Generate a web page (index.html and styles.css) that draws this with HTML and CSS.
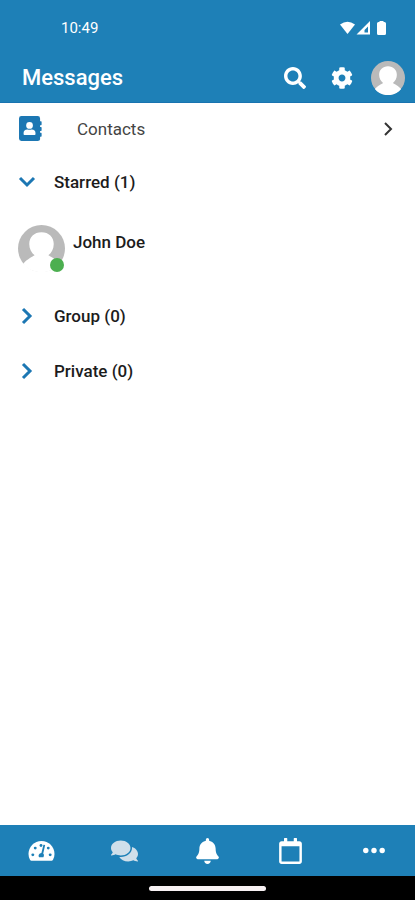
FILE: index.html
```html
<!DOCTYPE html>
<html lang="en">
<head>
<meta charset="utf-8">
<meta name="viewport" content="width=device-width, initial-scale=1">
<title>Messages</title>
<link rel="stylesheet" href="styles.css">
</head>
<body>
<svg class="defs" aria-hidden="true">
  <symbol id="person" viewBox="0 0 48 48">
    <circle cx="24" cy="24" r="24" fill="#bababa"/>
    <path fill="#fff" d="M24 7.500C16.500 7.500 11.500 12.500 11.500 19.500c0 5 2.200 9 5.500 11.500-2 1.500-8 4-11.500 8.500C9.500 45 16.500 48.200 24 48.200s14.500-3.200 18.500-8.700C39 35 33 32.500 31 31c3.300-2.500 5.500-6.500 5.500-11.500C36.500 12.500 31.500 7.500 24 7.500z"/>
  </symbol>
</svg>
<header class="top">
  <div class="status">
    <span class="clock">10:49</span>
    <svg class="signals" viewBox="0 0 48 16" aria-hidden="true">
      <path fill="#fff" d="M1 4.500Q8.500-1 16 4.500L8.500 14z"/>
      <path fill="#fff" fill-rule="evenodd" d="M17.500 14.500L31 1v13.500zM25.500 12.500h3.500V6.500l-3.500 3.500z"/>
      <path fill="#fff" d="M40.500 1h4v1h1Q47 2 47 3.500v10q0 1.500-1.500 1.500h-6q-1.500 0-1.500-1.500v-10q0-1.500 1.500-1.500h1z"/>
    </svg>
  </div>
  <div class="toolbar">
    <h1 class="title">Messages</h1>
    <button class="tool" aria-label="Search"><svg class="icon22" viewBox="0 0 512 512"><path fill="currentColor" d="M505 442.700L405.300 343c-4.500-4.500-10.600-7-17-7H372c27.600-35.300 44-79.700 44-128C416 93.100 322.900 0 208 0S0 93.100 0 208s93.100 208 208 208c48.300 0 92.700-16.400 128-44v16.300c0 6.400 2.500 12.500 7 17l99.700 99.700c9.400 9.400 24.600 9.400 33.900 0l28.300-28.300c9.400-9.400 9.400-24.600.1-34zM208 336c-70.700 0-128-57.200-128-128 0-70.700 57.200-128 128-128 70.700 0 128 57.200 128 128 0 70.700-57.200 128-128 128z"/></svg></button>
    <button class="tool" aria-label="Settings"><svg class="icon22" viewBox="0 0 512 512"><path fill="currentColor" d="M487.400 315.700l-42.600-24.600c4.300-23.200 4.300-47 0-70.200l42.600-24.600c4.900-2.800 7.100-8.600 5.500-14-11.100-35.600-30-67.800-54.700-94.600-3.800-4.100-10-5.100-14.800-2.300L380.800 110c-17.900-15.400-38.500-27.300-60.800-35.100V25.800c0-5.600-3.900-10.500-9.400-11.700-36.700-8.200-74.300-7.800-109.200 0-5.500 1.200-9.400 6.100-9.400 11.700V75c-22.200 7.900-42.800 19.800-60.800 35.100L88.700 85.500c-4.900-2.800-11-1.900-14.800 2.300-24.700 26.700-43.600 58.900-54.700 94.600-1.700 5.400.6 11.200 5.500 14L67.300 221c-4.300 23.200-4.300 47 0 70.200l-42.600 24.600c-4.900 2.800-7.100 8.600-5.500 14 11.100 35.600 30 67.800 54.700 94.600 3.800 4.100 10 5.100 14.800 2.300l42.600-24.600c17.900 15.400 38.500 27.300 60.800 35.100v49.200c0 5.600 3.900 10.500 9.400 11.700 36.700 8.200 74.300 7.800 109.200 0 5.500-1.200 9.400-6.100 9.400-11.700v-49.200c22.200-7.900 42.800-19.800 60.800-35.100l42.600 24.600c4.900 2.800 11 1.900 14.800-2.300 24.700-26.700 43.600-58.900 54.700-94.600 1.500-5.500-.7-11.300-5.600-14.100zM256 336c-44.100 0-80-35.900-80-80s35.900-80 80-80 80 35.900 80 80-35.900 80-80 80z"/></svg></button>
    <button class="tool" aria-label="Profile"><svg class="me"><use href="#person"/></svg></button>
  </div>
</header>
<main class="list">
  <a class="contacts" href="#contacts">
    <svg class="book" viewBox="0 0 24 26" aria-hidden="true">
      <path fill="#1c77b3" d="M2.500 0h17Q22 0 22 2.500v3h1q.6 0 .6.700v2.600q0 .7-.6.700h-1v2h1q.6 0 .6.700v2.600q0 .7-.6.700h-1v2h1q.6 0 .6.700v2.600q0 .7-.6.700h-1v2.700Q22 26 19.500 26h-17Q0 26 0 23.500v-21Q0 0 2.500 0z"/>
      <circle cx="11" cy="9.800" r="3.500" fill="#fff"/>
      <path fill="#fff" d="M4.800 19v-1.200q0-3.800 4-3.800 2.200.8 4.400 0 4 0 4 3.800V19q0 .8-.8.800H5.600q-.8 0-.8-.8z"/>
    </svg>
    <span class="grow">Contacts</span>
    <svg class="next" viewBox="0 0 10 16" aria-hidden="true"><path d="M2 2l6 6-6 6"/></svg>
  </a>
  <button class="section" aria-expanded="true">
    <svg class="chevron" viewBox="0 0 18 18" aria-hidden="true"><path d="M2 5l7 7 7-7"/></svg>
    <span>Starred (1)</span>
  </button>
  <a class="member" href="#john-doe">
    <span class="avatar"><svg class="face" aria-hidden="true"><use href="#person"/></svg><span class="online"></span></span>
    <span class="name">John Doe</span>
  </a>
  <button class="section" aria-expanded="false">
    <svg class="chevron" viewBox="0 0 18 18" aria-hidden="true"><path d="M5 2l7 7-7 7"/></svg>
    <span>Group (0)</span>
  </button>
  <button class="section" aria-expanded="false">
    <svg class="chevron" viewBox="0 0 18 18" aria-hidden="true"><path d="M5 2l7 7-7 7"/></svg>
    <span>Private (0)</span>
  </button>
</main>
<nav class="tabs">
  <a class="tab" href="#dashboard" aria-label="Dashboard"><svg class="tab-icon" viewBox="0 0 28 26">
    <path fill="#fff" d="M14 2.500C6.500 2.500.5 8.500.5 16q0 3.500 1.700 6.300.5.700 1.300.7h21q.8 0 1.300-.7Q27.500 19.500 27.500 16C27.500 8.500 21.500 2.500 14 2.500z"/>
    <g fill="#1e80b7"><circle cx="13.500" cy="7.300" r="1.500"/><circle cx="7.500" cy="10" r="1.500"/><circle cx="5" cy="17" r="1.500"/><circle cx="21" cy="10" r="1.500"/><circle cx="23" cy="17" r="1.500"/><path d="M16 6.500l1.800.4-2 8.700q1 1 .7 2.400l-.5 1.500h-4.500q-1-1.200-.3-2.700.8-1.500 2.700-1.600z"/></g>
  </svg></a>
  <a class="tab" href="#messages" aria-label="Messages" aria-current="page"><svg class="tab-icon" viewBox="0 0 576 512"><path fill="#d0dfea" d="M416 192c0-88.400-93.100-160-208-160S0 103.600 0 192c0 34.300 14.100 65.900 38 92-13.400 30.200-35.500 54.200-35.800 54.500-2.200 2.300-2.800 5.700-1.500 8.700S4.800 352 8 352c36.600 0 66.900-12.300 88.700-25 32.200 15.700 70.300 25 111.300 25 114.900 0 208-71.600 208-160zm122 220c23.900-26 38-57.700 38-92 0-66.900-53.500-124.200-129.300-148.100.9 6.600 1.300 13.300 1.300 20.100 0 105.900-107.700 192-240 192-10.800 0-21.300-.8-31.700-1.900C207.800 439.600 281.800 480 368 480c41 0 79.100-9.200 111.300-25 21.800 12.700 52.100 25 88.700 25 3.200 0 6.100-1.900 7.300-4.800 1.300-2.900.7-6.300-1.500-8.700-.3-.3-22.400-24.200-35.800-54.500z"/></svg></a>
  <a class="tab" href="#alerts" aria-label="Notifications"><svg class="tab-icon" viewBox="0 0 448 512"><path fill="#fff" d="M224 512c35.320 0 63.970-28.650 63.970-64H160.030c0 35.350 28.650 64 63.970 64zm215.390-149.710c-19.320-20.760-55.470-51.990-55.470-154.290 0-77.700-54.480-139.900-127.940-155.160V32c0-17.670-14.320-32-31.980-32s-31.980 14.330-31.980 32v20.840C118.560 68.100 64.080 130.300 64.080 208c0 102.300-36.150 133.530-55.470 154.290-6 6.450-8.660 14.160-8.610 21.710.11 16.400 12.980 32 32.100 32h383.800c19.120 0 32-15.600 32.100-32 .05-7.550-2.610-15.270-8.610-21.710z"/></svg></a>
  <a class="tab" href="#calendar" aria-label="Calendar"><svg class="tab-icon" viewBox="0 0 448 512"><path fill="#fff" d="M400 64h-48V12c0-6.600-5.400-12-12-12h-40c-6.600 0-12 5.400-12 12v52H160V12c0-6.600-5.400-12-12-12h-40c-6.600 0-12 5.400-12 12v52H48C21.500 64 0 85.500 0 112v352c0 26.500 21.500 48 48 48h352c26.500 0 48-21.500 48-48V112c0-26.500-21.500-48-48-48zm-6 400H54c-3.300 0-6-2.700-6-6V160h352v298c0 3.300-2.700 6-6 6z"/></svg></a>
  <a class="tab" href="#more" aria-label="More"><svg class="tab-icon" viewBox="0 0 28 26"><g fill="#fff"><circle cx="6" cy="12.500" r="2.800"/><circle cx="14.500" cy="12.500" r="2.800"/><circle cx="23" cy="12.500" r="2.800"/></g></svg></a>
</nav>
<div class="gesture"><span class="pill"></span></div>
</body>
</html>
```
FILE: styles.css
```css
* { box-sizing: border-box; }
body {
  margin: 0;
  min-height: 100vh;
  display: flex;
  flex-direction: column;
  background: #fff;
  color: #1c1c1c;
  font-family: Roboto, sans-serif;
  font-size: 17px;
  line-height: 24px;
}
button {
  border: 0;
  padding: 0;
  background: none;
  color: inherit;
  font: inherit;
  text-align: left;
  cursor: pointer;
}
a { color: inherit; text-decoration: none; }
svg { display: block; flex: none; }
.defs { position: absolute; width: 0; height: 0; }

.top { background: #1e80b7; color: #fff; border-bottom: 1px solid #1873b0; }
.status {
  height: 56px;
  padding: 0 28px 0 61px;
  display: flex;
  align-items: center;
  justify-content: space-between;
}
.clock { font-size: 15px; }
.signals { width: 48px; height: 16px; }
.toolbar {
  height: 46px;
  padding: 0 10px 2px 22px;
  display: flex;
  align-items: center;
}
.title { flex: 1; margin: 0; font-size: 22px; font-weight: 500; }
.tool { width: 47px; display: flex; justify-content: center; }
.tool:last-child { width: 34px; margin-left: 6px; }
.icon22 { width: 22px; height: 22px; }
.me { width: 34px; height: 34px; }

.list { flex: 1; display: flex; flex-direction: column; }
.contacts {
  height: 51px;
  padding: 0 22px 0 19px;
  display: flex;
  align-items: center;
  color: #444;
}
.book { width: 23px; height: 25px; margin-right: 35px; }
.grow { flex: 1; }
.next { width: 10px; height: 16px; fill: none; stroke: #333; stroke-width: 2; }
.section {
  height: 55px;
  padding: 0 18px;
  display: flex;
  align-items: center;
  gap: 18px;
  font-weight: 500;
}
.chevron { width: 18px; height: 18px; fill: none; stroke: #1c77b3; stroke-width: 3; }
.member {
  height: 79px;
  padding: 16px 18px;
  display: flex;
  gap: 8px;
  font-weight: 500;
}
.avatar { position: relative; width: 47px; height: 47px; }
.face { width: 47px; height: 47px; }
.online {
  position: absolute;
  right: 1px;
  bottom: 0;
  width: 14px;
  height: 14px;
  border-radius: 50%;
  background: #4caf50;
}
.name { padding-top: 5px; }

.tabs { height: 51px; display: flex; background: #1e80b7; }
.tab { flex: 1; display: flex; align-items: center; justify-content: center; }
.tab-icon { width: 27px; height: 26px; }
.gesture {
  height: 24px;
  display: flex;
  align-items: center;
  justify-content: center;
  background: #000;
}
.pill { width: 28%; height: 5px; border-radius: 3px; background: #f7f1f3; }
```
